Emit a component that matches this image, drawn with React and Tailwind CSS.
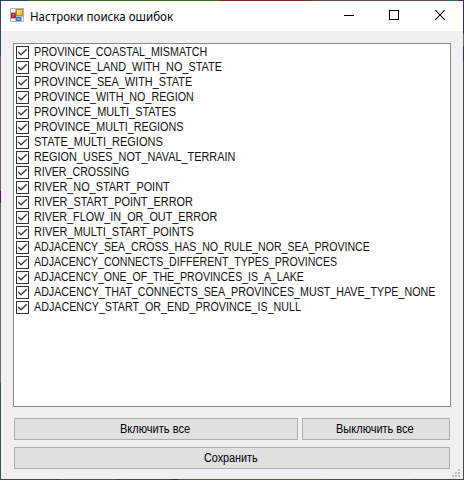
import { useLayoutEffect, useRef, useState } from 'react';

const CHECKS = [
  ['PROVINCE_COASTAL_MISMATCH', 173],
  ['PROVINCE_LAND_WITH_NO_STATE', 188],
  ['PROVINCE_SEA_WITH_STATE', 158],
  ['PROVINCE_WITH_NO_REGION', 160],
  ['PROVINCE_MULTI_STATES', 142],
  ['PROVINCE_MULTI_REGIONS', 149],
  ['STATE_MULTI_REGIONS', 129],
  ['REGION_USES_NOT_NAVAL_TERRAIN', 201],
  ['RIVER_CROSSING', 95],
  ['RIVER_NO_START_POINT', 136],
  ['RIVER_START_POINT_ERROR', 159],
  ['RIVER_FLOW_IN_OR_OUT_ERROR', 183],
  ['RIVER_MULTI_START_POINTS', 160],
  ['ADJACENCY_SEA_CROSS_HAS_NO_RULE_NOR_SEA_PROVINCE', 336],
  ['ADJACENCY_CONNECTS_DIFFERENT_TYPES_PROVINCES', 303],
  ['ADJACENCY_ONE_OF_THE_PROVINCES_IS_A_LAKE', 270],
  ['ADJACENCY_THAT_CONNECTS_SEA_PROVINCES_MUST_HAVE_TYPE_NONE', 401],
  ['ADJACENCY_START_OR_END_PROVINCE_IS_NULL', 267],
];

// Condenses a label horizontally to the given advance width.
function FitText({ width, className = '', children }) {
  const ref = useRef(null);
  const [scale, setScale] = useState(1);
  useLayoutEffect(() => {
    setScale(width / ref.current.offsetWidth);
  }, [width]);
  return (
    <span className={`block whitespace-nowrap ${className}`} style={{ width }}>
      <span ref={ref} className="inline-block origin-left" style={{ transform: `scaleX(${scale})` }}>
        {children}
      </span>
    </span>
  );
}

function Checkbox() {
  return (
    <svg width="13" height="13" viewBox="0 0 13 13" className="shrink-0">
      <rect x="0.5" y="0.5" width="12" height="12" fill="#fff" stroke="#333" />
      <path d="M2.2 6 5 8.8 10.8 3.2" fill="none" stroke="#3c3c3c" strokeWidth="1.3" />
    </svg>
  );
}

function AppIcon() {
  return (
    <svg width="14" height="14" viewBox="0 0 14 14" className="mb-[2px] shrink-0">
      <defs>
        <linearGradient id="gold" x1="0" y1="0" x2="1" y2="1">
          <stop offset="0" stopColor="#fff3a6" />
          <stop offset="1" stopColor="#f0a812" />
        </linearGradient>
      </defs>
      <rect width="14" height="14" fill="#b4b8be" />
      <rect x="1" y="1" width="4" height="3" fill="#fff" />
      <rect x="1" y="11" width="4" height="2" fill="#fff" />
      <rect x="12" y="9" width="1" height="4" fill="#fff" />
      <rect x="1.5" y="5.5" width="4" height="4" fill="#c43a2a" stroke="#a03028" />
      <rect x="3" y="6" width="1" height="1" fill="#f0a090" />
      <rect x="6.5" y="1.5" width="6" height="6" fill="url(#gold)" stroke="#c08a28" />
      <rect x="6.5" y="9.5" width="4" height="3" fill="#6ca8f4" stroke="#3d70cc" />
    </svg>
  );
}

function Button({ className, width, children }) {
  return (
    <button className={`flex h-[22px] items-center justify-center border border-[#adadad] bg-[#e1e1e1] pr-[2px] ${className}`}>
      <FitText width={width}>{children}</FitText>
    </button>
  );
}

export default function App() {
  return (
    <div className="flex h-[480px] w-[464px] flex-col overflow-hidden bg-[#4b4358] font-['Liberation_Sans',sans-serif] text-[12px] leading-[15px] text-black">
      <div className="flex h-px shrink-0">
        <div className="w-[28px] bg-[#2c4568]" />
        <div className="w-[192px] bg-[#48641f]" />
        <div className="w-[91px] bg-[#743024]" />
        <div className="w-[137px] bg-[#6b5050]" />
        <div className="w-[10px] bg-[#2e6b58]" />
        <div className="grow bg-[#452066]" />
      </div>
      <div className="flex h-[478px] shrink-0">
        <div className="flex w-px shrink-0 flex-col">
          <div className="h-[55px] bg-[#2c4568]" />
          <div className="h-[135px] bg-[#795c58]" />
          <div className="h-[12px] bg-[#501a50]" />
          <div className="h-[180px] bg-[#6b6d55]" />
          <div className="grow bg-[#355557]" />
        </div>
        <div className="flex w-[462px] shrink-0 flex-col bg-[#f0f0f0]">
          <header className="flex h-[30px] shrink-0 items-center bg-white pl-[9px]">
            <AppIcon />
            <FitText width={143} className="ml-[6px] font-['Noto_Sans',sans-serif] text-[12px]">
              Настроки поиска ошибок
            </FitText>
            <svg width="102" height="12" viewBox="0 0 102 12" className="ml-[171px]" fill="none" stroke="#000">
              <path d="M0 5.5h10" />
              <rect x="45.5" y="0.5" width="9" height="9" />
              <path d="m91.2 0.2 9.6 9.6m0-9.6-9.6 9.6" strokeWidth="1.1" />
            </svg>
          </header>
          <main className="flex grow flex-col px-3 pt-3">
            <div className="h-[364px] w-[438px] shrink-0 border border-[#828790] bg-white pl-[2px] pt-px">
              {CHECKS.map(([name, width]) => (
                <label key={name} className="flex h-[15px] items-center">
                  <Checkbox />
                  <FitText width={width} className="ml-[5px] text-[#111]">{name}</FitText>
                </label>
              ))}
            </div>
            <div className="mt-[11px] flex gap-1 pl-px">
              <Button className="w-[284px]" width={70}>Включить все</Button>
              <Button className="w-[148px]" width={78}>Выключить все</Button>
            </div>
            <Button className="ml-px mt-[7px] w-[436px]" width={54}>Сохранить</Button>
            <svg width="9" height="9" viewBox="0 0 9 9" className="-mr-[10px] self-end" fill="#bfbfbf">
              <path d="M6 0h2v2H6zM3 3h2v2H3zM6 3h2v2H6zM0 6h2v2H0zM3 6h2v2H3zM6 6h2v2H6z" />
            </svg>
          </main>
        </div>
        <div className="flex w-px shrink-0 flex-col">
          <div className="h-[33px] bg-[#452066]" />
          <div className="h-[12px] bg-[#76604c]" />
          <div className="h-[15px] bg-[#452066]" />
          <div className="grow bg-[#4b4358]" />
        </div>
      </div>
      <div className="flex h-px shrink-0">
        <div className="w-[60px] bg-[#543466]" />
        <div className="w-[56px] bg-[#5c4c38]" />
        <div className="w-[55px] bg-[#543466]" />
        <div className="w-[8px] bg-[#900c14]" />
        <div className="w-[143px] bg-[#6c5220]" />
        <div className="w-[88px] bg-[#3e5838]" />
        <div className="grow bg-[#543466]" />
      </div>
    </div>
  );
}
